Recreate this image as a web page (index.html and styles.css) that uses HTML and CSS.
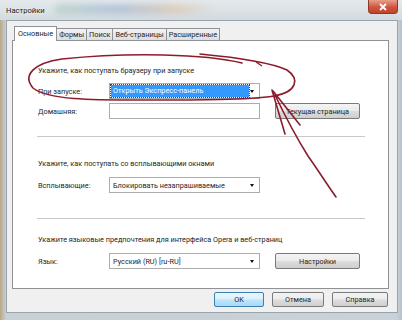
FILE: index.html
```html
<!DOCTYPE html>
<html lang="ru">
<head>
<meta charset="utf-8">
<link rel="stylesheet" href="styles.css">
</head>
<body>
<div class="window">
  <div class="titlebar">
    <span class="title">Настройки</span>
    <div class="glass-blur"></div>
    <div class="close"><svg width="10" height="8" viewBox="0 0 10 8"><path d="M2 1 L8 7 M8 1 L2 7" stroke="#fff" stroke-width="1.8"/></svg></div>
  </div>
  <div class="client">
    <div class="tabs">
      <div class="tab active">Основные</div>
      <div class="tab">Формы</div>
      <div class="tab">Поиск</div>
      <div class="tab">Веб-страницы</div>
      <div class="tab">Расширенные</div>
    </div>
    <div class="panel">
      <div class="heading h1">Укажите, как поступать браузеру при запуске</div>
      <div class="row r1">
        <span class="label">При запуске:</span>
        <div class="combo"><span class="sel">Открыть Экспресс-панель</span><span class="arrow"></span></div>
      </div>
      <div class="row r2">
        <span class="label">Домашняя:</span>
        <div class="input"></div>
        <div class="btn">Текущая страница</div>
      </div>
      <div class="sep s1"></div>
      <div class="heading h2">Укажите, как поступать со всплывающими окнами</div>
      <div class="row r3">
        <span class="label">Всплывающие:</span>
        <div class="combo"><span class="val">Блокировать незапрашиваемые</span><span class="arrow"></span></div>
      </div>
      <div class="sep s2"></div>
      <div class="heading h3">Укажите языковые предпочтения для интерфейса Opera и веб-страниц</div>
      <div class="row r4">
        <span class="label">Язык:</span>
        <div class="combo"><span class="val">Русский (RU) [ru-RU]</span><span class="arrow"></span></div>
        <div class="btn">Настройки</div>
      </div>
    </div>
    <div class="buttons">
      <div class="btn dlg ok">OK</div>
      <div class="btn dlg">Отмена</div>
      <div class="btn dlg">Справка</div>
    </div>
  </div>
</div>
<svg class="marker" width="402" height="320" viewBox="0 0 402 320">
  <path d="M242 63 C205 54 130 52 62 59 C34 63 22 75 33 88 C48 100 92 100 140 100 C200 100 248 100 274 96 C297 92 300 79 287 70 C272 63 242 58 200 54" fill="none" stroke="#8c1b2c" stroke-width="1.6" stroke-linecap="round"/>
  <path d="M256 62 L262 66" fill="none" stroke="#8c1b2c" stroke-width="1.4"/>
  <path d="M272 90 L285 134 M273 91 L300 125 M275 95 C286 118 298 140 308 156 C318 170 326 183 336 197" fill="none" stroke="#8c1b2c" stroke-width="1.6" stroke-linecap="round"/>
</svg>
</body>
</html>
```
FILE: styles.css
```css
html, body { margin: 0; padding: 0; }
body {
  width: 402px; height: 320px; overflow: hidden;
  font-family: Roboto, "Noto Sans", sans-serif;
  font-size: 7.3px; color: #262626;
  background: linear-gradient(90deg, #b9a888 0, #c9d0d3 6px, #c8d2d8 396px, #b8c2c8 402px);
  position: relative;
}
.window { width: 402px; height: 320px; display: flex; flex-direction: column; }
.titlebar {
  height: 20px; position: relative; display: flex; align-items: center;
  background: linear-gradient(180deg, #e4e9ec 0, #d3dbe0 100%);
}
.title { padding-left: 6px; font-size: 7.6px; color: #222; text-shadow: 0 0 4px #fff; position: relative; z-index: 1; }
.glass-blur {
  position: absolute; left: 55px; top: 4px; width: 160px; height: 10px;
  background: linear-gradient(90deg, rgba(140,190,170,0.35), rgba(120,150,200,0.4) 40%, rgba(220,170,110,0.35) 75%, rgba(220,200,170,0));
  filter: blur(3px);
}
.close {
  position: absolute; right: 4px; top: 0; width: 30px; height: 14px;
  border-radius: 0 0 4px 4px; border: 1px solid #8b3a2a; border-top: none;
  background: linear-gradient(180deg, #e8a08a 0, #d0553d 55%, #c24328 100%);
  display: flex; align-items: center; justify-content: center; box-sizing: border-box;
}
.client {
  margin-left: 6px; width: 392px; height: 293px; box-sizing: border-box;
  background: #f0f0f0; border: 1px solid #9aa4ac;
  padding: 5px 8px 0 5px; display: flex; flex-direction: column;
}
.tabs { display: flex; height: 14px; padding-left: 2px; align-items: flex-end; position: relative; z-index: 1; }
.tab {
  height: 12px; line-height: 12px; padding: 0 2px; box-sizing: border-box;
  border: 1px solid #8e9297; border-bottom: none; margin-right: -1px;
  background: linear-gradient(180deg, #f3f3f3, #dedede);
}
.tab.active { line-height: 13px; background: #fff; padding: 0 3px; margin-bottom: -1px; height: 15px; }
.panel {
  height: 249px; box-sizing: border-box; background: #fff;
  border: 1px solid #8e9297; padding: 24px 0 0 25px;
  display: flex; flex-direction: column;
}
.heading { height: 12px; line-height: 12px; }
.row { display: flex; align-items: center; height: 16px; }
.label { width: 71px; flex: none; }
.combo, .input {
  width: 151px; height: 16px; box-sizing: border-box; border: 1px solid #acacac;
  background: #fff; display: flex; align-items: center; position: relative; flex: none;
}
.combo .sel {
  margin: 1px; height: 12px; line-height: 12px; width: 136px; background: #3399ff; color: #fff;
  padding-left: 2px; outline: 1px dotted #1a4d80;
}
.combo .val { padding-left: 3px; }
.arrow {
  position: absolute; right: 5px; top: 6px; width: 0; height: 0;
  border-left: 2.5px solid transparent; border-right: 2.5px solid transparent; border-top: 3px solid #111;
}
.btn {
  height: 16px; box-sizing: border-box; border: 1px solid #7a7a7a; border-radius: 2px;
  background: linear-gradient(180deg, #f4f4f4 0, #ebebeb 48%, #dddddd 52%, #cfcfcf 100%);
  display: flex; align-items: center; justify-content: center;
}
.row .btn { width: 85px; margin-left: 15px; }
.h1 { margin-top: 0; }
.r1 { margin-top: 6px; }
.r2 { margin-top: 4px; }
.sep { height: 1px; background: #c8c8c8; width: 328px; margin-left: -1px; }
.s1 { margin-top: 17px; }
.h2 { margin-top: 21px; }
.r3 { margin-top: 7px; }
.s2 { margin-top: 25px; }
.h3 { margin-top: 15px; }
.r4 { margin-top: 7px; }
.buttons { display: flex; justify-content: flex-end; gap: 8px; margin-top: 3px; padding-right: 1px; }
.btn.dlg { width: 52px; height: 15px; }
.btn.dlg:nth-child(3) { width: 56px; }
.btn.ok { border-color: #3c7fb1; background: linear-gradient(180deg, #eaf6fd 0, #d9f0fc 48%, #bee6fd 52%, #a7d9f5 100%); width: 50px; }
.marker { position: absolute; left: 0; top: 0; pointer-events: none; }
```
